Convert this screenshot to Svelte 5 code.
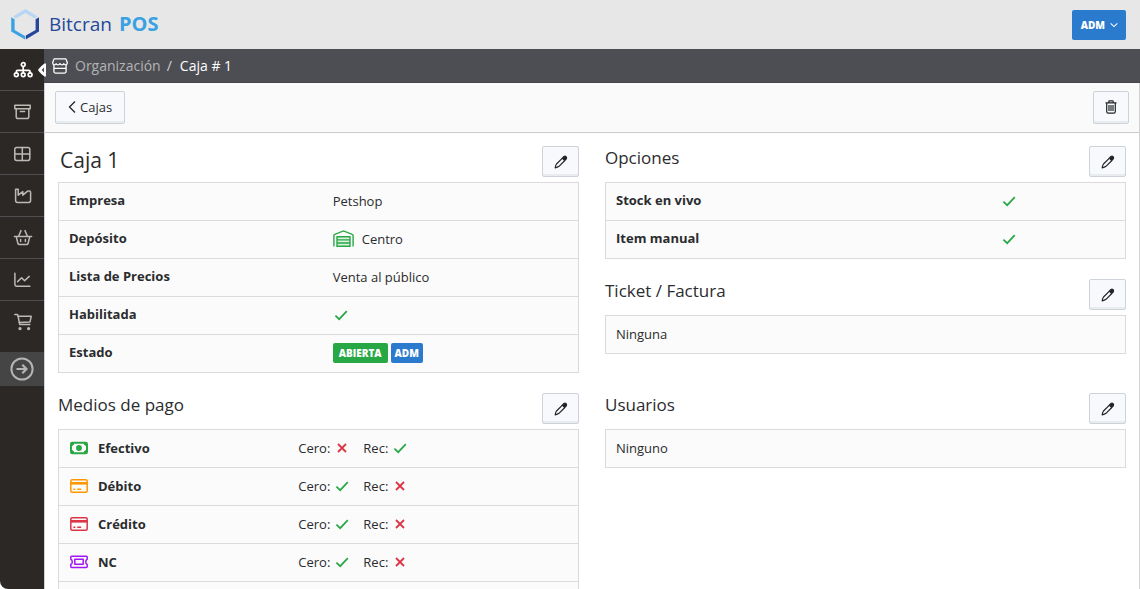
<script lang="ts">
  type IconName = string;

  const nav: { icon: IconName; label: string; active?: boolean }[] = [
    { icon: 'org', label: 'Organización', active: true },
    { icon: 'archive', label: 'Archivo' },
    { icon: 'grid', label: 'Tablas' },
    { icon: 'factory', label: 'Producción' },
    { icon: 'basket', label: 'Ventas' },
    { icon: 'chart', label: 'Reportes' },
    { icon: 'cart', label: 'Compras' }
  ];

  const options = ['Stock en vivo', 'Item manual'];

  const payments = [
    { name: 'Efectivo', icon: 'cash', zero: false, surcharge: true },
    { name: 'Débito', icon: 'debit', zero: true, surcharge: false },
    { name: 'Crédito', icon: 'credit', zero: true, surcharge: false },
    { name: 'NC', icon: 'ticket', zero: true, surcharge: false }
  ];
</script>

{#snippet check()}
  <svg class="mark mark--yes" viewBox="0 0 16 16" role="img" aria-label="Sí">
    <path d="M2.4 8.6 6.2 12.2 13.8 4.2" />
  </svg>
{/snippet}

{#snippet cross()}
  <svg class="mark mark--no" viewBox="0 0 16 16" role="img" aria-label="No">
    <path d="M4 4 12 12M12 4 4 12" />
  </svg>
{/snippet}

{#snippet editButton(label: string)}
  <button class="btn btn--icon" type="button" aria-label={label}>
    <svg viewBox="0 0 16 16" width="16" height="16" fill="none" stroke="#212529" stroke-width="1.2" stroke-linejoin="round">
      <path d="M9.4 4.1 3.5 10q-1 1.4-1.3 3.8 2.4-.4 3.8-1.5l5.8-5.8" />
      <path d="M9.3 4.2 11 2.5q1.1-.7 2.1.2.9 1 .2 2.2l-1.6 1.7z" fill="#212529" />
    </svg>
  </button>
{/snippet}

{#snippet navIcon(name: IconName)}
  <svg viewBox="0 0 20 20" width="20" height="20" fill="none" stroke="currentColor" stroke-width="1.5" stroke-linejoin="round" stroke-linecap="round">
    {#if name === 'org'}
      <g stroke-width="1.7">
        <circle cx="10.2" cy="4.6" r="1.9" />
        <circle cx="3.3" cy="14.8" r="1.9" />
        <circle cx="10.2" cy="14.8" r="1.9" />
        <circle cx="17.1" cy="14.8" r="1.9" />
        <path d="M10.2 6.5v6.4M3.3 12.9v-1.2q0-1.3 1.3-1.3h11.200q1.3 0 1.3 1.3v1.2" />
      </g>
    {:else if name === 'archive'}
      <path d="M1.8 3.3h15.4v3.4H1.8zM3.2 6.7v8q0 1.8 1.8 1.8h9q1.8 0 1.8-1.8v-8M7.4 9.6h4.2" />
    {:else if name === 'grid'}
      <rect x="1.8" y="3.4" width="15" height="13" rx="1.8" />
      <path d="M9.3 3.4v13M1.8 9.9h15" />
    {:else if name === 'factory'}
      <path d="M2.6 3.2h2.6v6l4.6-3.6v3.6L14.6 5.2q1.2-.6 2.4 0 .6.4.6 1.2v8.2q0 1.8-1.8 1.8H4.4q-1.8 0-1.8-1.8z" />
    {:else if name === 'basket'}
      <path d="M1.4 8.400h17.200M3.2 8.400 4.8 15q.3 1.600 1.900 1.600h6.600q1.600 0 1.900-1.600l1.600-6.600M5.6 8.200 8 2.600M14.4 8.200 12 2.600M7.600 11.600v2M12.400 11.600v2" />
    {:else if name === 'chart'}
      <path d="M1.9 3.2v11.6q0 1.4 1.4 1.4h13.6M4.6 11.6l4-3.8 3 3 4.6-4.4" />
    {:else if name === 'cart'}
      <path d="M1.8 2.400H4q.7 0 .9.7l1.800 9.3h10.100M4.700 4.300h13.500l-1.200 5.600-11 .700" />
      <circle cx="7" cy="16.600" r=".9" fill="currentColor" />
      <circle cx="15.600" cy="16.600" r=".9" fill="currentColor" />
    {/if}
  </svg>
{/snippet}

{#snippet payIcon(name: IconName)}
  <svg class="pay pay--{name}" viewBox="0 0 18 16" width="18" height="16" fill="none" stroke="currentColor" stroke-width="1.5" stroke-linejoin="round">
    {#if name === 'cash'}
      <rect x="1" y="2.8" width="16" height="10.4" rx="1.2" stroke-width="2" />
      <path d="M1.5 5.6q2 0 2.3-2.3H1.5zM16.5 5.6q-2 0-2.3-2.3h2.3zM1.5 10.4q2 0 2.3 2.3H1.5zM16.5 10.4q-2 0-2.3 2.3h2.3z" fill="currentColor" stroke-width="1" />
      <circle cx="9" cy="8" r="2.9" fill="currentColor" stroke="none" />
    {:else if name === 'ticket'}
      <path d="M.8 3q0-.8.8-.8h14.8q.8 0 .8.8v2.200q-1.5.6-1.5 2.600t1.500 2.600v2.200q0 .8-.8.8H1.600q-.8 0-.8-.8v-2.200q1.500-.6 1.500-2.600T.8 5.200z" />
      <rect x="4.800" y="5.300" width="8.400" height="5" />
    {:else}
      <rect x=".8" y="1.7" width="16.4" height="12.6" rx="1.5" />
      <path d="M1 5.300h16" stroke-width="2.600" />
      <path d="M3.400 11.200h2M7.200 11.200h4" stroke-width="1.400" />
    {/if}
  </svg>
{/snippet}

<div class="app">
  <header class="topbar">
    <a class="brand" href="/" aria-label="Bitcran POS">
      <svg viewBox="0 0 30 32" width="30" height="32" aria-hidden="true">
        <path d="M3.400 8.200 15.400 1 27.200 8.200 25 10.600 15.400 5 5.600 10.600z" fill="#b7d5f4" />
        <path d="M1.200 9.200 4.600 11.200V22L15 28V31.600L1.200 23.600z" fill="#3aa2e2" />
        <path d="M29 9.200 25.600 11.200V22L15.800 27.600V31.600L29 23.600z" fill="#25479a" />
      </svg>
      <span class="brand__name">Bitcran <b>POS</b></span>
    </a>
    <button class="user" type="button">
      ADM
      <svg viewBox="0 0 10 10" width="8" height="8" fill="none" stroke="currentColor" stroke-width="1.3" aria-hidden="true"><path d="M.8 3 5 7l4.200-4" /></svg>
    </button>
  </header>

  <div class="body">
    <nav class="sidebar" aria-label="Principal">
      {#each nav as item}
        <a class="sidebar__item" class:active={item.active} href="/" aria-label={item.label}>
          {@render navIcon(item.icon)}
          {#if item.active}
            <svg class="sidebar__arrow" viewBox="0 0 8 14" width="8" height="14" aria-hidden="true">
              <path d="M8 .5v13H6.500Q3 11 .6 8q-.8-1 0-2Q3 3 6.500.5z" fill="#fff" />
              <path d="M6 4.500v5L3.600 7z" fill="#4c4d52" />
            </svg>
          {/if}
        </a>
      {/each}
      <button class="sidebar__toggle" type="button" aria-label="Expandir menú">
        <svg viewBox="0 0 24 24" width="24" height="24" fill="none" stroke="currentColor" stroke-width="2" aria-hidden="true">
          <circle cx="12" cy="12" r="10.6" />
          <path d="M6.500 12H16M12.300 7.800 16.500 12l-4.200 4.200" stroke-width="2.2" />
        </svg>
      </button>
    </nav>

    <div class="page">
      <nav class="crumbs" aria-label="Ruta">
        <svg viewBox="0 0 16 16" width="16" height="16" fill="none" stroke="#fff" stroke-width="1.3" stroke-linejoin="round" aria-hidden="true">
          <path d="M2.700.9h10.600q.8 0 1 .8l1 3q.2 1.800-1.500 2.200-1.400.1-1.900-1.300-.5 1.300-1.900 1.300T8 5.600q-.5 1.300-2 1.300T4.100 5.600Q3.600 7 2.200 6.900.5 6.500.7 4.700l1-3q.2-.8 1-.8zM1.900 7v6.600q0 1.500 1.500 1.500h9.200q1.500 0 1.500-1.500V7M2 10.400h12" />
        </svg>
        <a href="/">Organización</a>
        <span class="crumbs__sep">/</span>
        <span class="crumbs__current">Caja # 1</span>
      </nav>

      <div class="toolbar">
        <button class="btn btn--back" type="button">
          <svg viewBox="0 0 8 14" width="8" height="14" fill="none" stroke="#212529" stroke-width="1.3" aria-hidden="true"><path d="M7 1.500 1.500 7 7 12.500" /></svg>
          Cajas
        </button>
        <button class="btn btn--trash" type="button" aria-label="Eliminar">
          <svg viewBox="0 0 12 14" width="12" height="14" fill="none" stroke="#212529" stroke-width="1.2" aria-hidden="true">
            <path d="M.5 2.900h11M3.800 2.800V1.600q0-.8.8-.8h2.800q.8 0 .8.8v1.200M1.700 3v8.600q0 1.600 1.600 1.600h5.400q1.600 0 1.600-1.600V3M4 5v6M6 5v6M8 5v6" />
          </svg>
        </button>
      </div>

      <main class="content">
        <section>
          <div class="head">
            <h1>Caja 1</h1>
            {@render editButton('Editar caja')}
          </div>
          <table class="details">
            <tbody>
              <tr><th scope="row">Empresa</th><td>Petshop</td></tr>
              <tr>
                <th scope="row">Depósito</th>
                <td>
                  <span class="inline">
                    <svg viewBox="0 0 21 17" width="21" height="17" fill="none" stroke="#28a745" stroke-width="1.4" aria-hidden="true">
                      <path d="M.9 16.500V5.600q0-1 .9-1.300L10.500.9l8.700 3.400q.9.3.9 1.300v10.900" />
                      <path d="M4 6.800h13v9.400H4zM4 9.900h13M4 13h13" fill="#d9f0de" />
                    </svg>
                    Centro
                  </span>
                </td>
              </tr>
              <tr><th scope="row">Lista de Precios</th><td>Venta al público</td></tr>
              <tr><th scope="row">Habilitada</th><td>{@render check()}</td></tr>
              <tr>
                <th scope="row">Estado</th>
                <td>
                  <span class="badges">
                    <span class="badge badge--open">ABIERTA</span>
                    <span class="badge badge--user">ADM</span>
                  </span>
                </td>
              </tr>
            </tbody>
          </table>
        </section>

        <div class="stack">
          <section>
            <div class="head">
              <h2>Opciones</h2>
              {@render editButton('Editar opciones')}
            </div>
            <table class="options">
              <tbody>
                {#each options as option}
                  <tr><th scope="row">{option}</th><td>{@render check()}</td></tr>
                {/each}
              </tbody>
            </table>
          </section>
          <section>
            <div class="head">
              <h2>Ticket / Factura</h2>
              {@render editButton('Editar ticket')}
            </div>
            <table><tbody><tr><td>Ninguna</td></tr></tbody></table>
          </section>
        </div>

        <section>
          <div class="head">
            <h2>Medios de pago</h2>
            {@render editButton('Editar medios de pago')}
          </div>
          <table class="payments">
            <tbody>
              {#each payments as payment}
                <tr>
                  <th scope="row"><span class="inline">{@render payIcon(payment.icon)}{payment.name}</span></th>
                  <td>
                    <span class="flags">
                      <span class="flag">Cero: {#if payment.zero}{@render check()}{:else}{@render cross()}{/if}</span>
                      <span class="flag">Rec: {#if payment.surcharge}{@render check()}{:else}{@render cross()}{/if}</span>
                    </span>
                  </td>
                </tr>
              {/each}
              <tr><th></th><td></td></tr>
            </tbody>
          </table>
        </section>

        <section>
          <div class="head">
            <h2>Usuarios</h2>
            {@render editButton('Editar usuarios')}
          </div>
          <table><tbody><tr><td>Ninguno</td></tr></tbody></table>
        </section>
      </main>
    </div>
  </div>
</div>

<style>
  .app {
    display: flex;
    flex-direction: column;
    height: 100vh;
    overflow: hidden;
    background: #fff;
    color: #2a2c2e;
    font: 13px/20px "Open Sans", "Noto Sans", sans-serif;
  }
  .app :global(*) { box-sizing: border-box; }
  svg { display: block; flex: none; }
  button { font: inherit; color: inherit; cursor: pointer; }
  a { text-decoration: none; }

  .topbar {
    flex: none;
    display: flex;
    align-items: center;
    justify-content: space-between;
    height: 49px;
    padding: 0 14px 0 10px;
    background: #e7e7e7;
  }
  .brand { display: flex; align-items: center; gap: 9px; padding-bottom: 2px; }
  .brand__name {
    display: flex;
    gap: 7px;
    color: #25479a;
    font-size: 19px;
    line-height: 24px;
  }
  .brand__name b { color: #3aa2e2; font-size: 20px; }
  .user {
    display: flex;
    align-items: center;
    gap: 5px;
    height: 30px;
    padding: 0 8px 0 9px;
    border: 0;
    border-radius: 2px;
    background: #2a7acd;
    color: #fff;
    font-size: 10px;
    font-weight: 800;
  }

  .body { flex: 1; display: flex; min-height: 0; }
  .sidebar {
    flex: none;
    width: 44px;
    background: #2c2825;
    border-bottom-left-radius: 8px;
  }
  .sidebar__item {
    position: relative;
    display: flex;
    align-items: center;
    justify-content: center;
    height: 42px;
    padding-left: 2px;
    border-bottom: 1px solid #4f4f52;
    color: #bdb9b6;
  }
  .sidebar__item:nth-child(7) { border-bottom: 0; }
  .sidebar__item.active { color: #fff; }
  .sidebar__arrow { position: absolute; right: -2px; top: 14px; z-index: 1; }
  .sidebar__toggle {
    display: flex;
    align-items: center;
    justify-content: center;
    width: 100%;
    height: 34px;
    margin-top: 9px;
    padding: 0;
    border: 0;
    background: #454545;
    color: #b4b4b4;
  }

  .page {
    flex: 1;
    min-width: 0;
    display: flex;
    flex-direction: column;
    border-left: 1px solid #d2d2d2;
    border-right: 1px solid #d2d2d2;
  }
  .crumbs {
    flex: none;
    display: flex;
    align-items: center;
    height: 34px;
    margin: 0 -1px;
    padding: 1px 8px 0;
    background: #4d4e53;
    border-bottom: 1px solid #46474b;
    font-size: 14px;
  }
  .crumbs a { margin-left: 7px; color: #b3b3b5; }
  .crumbs__sep { margin: 0 8px 0 6px; color: #d2d2d2; }
  .crumbs__current { color: #fff; }

  .toolbar {
    flex: none;
    display: flex;
    align-items: center;
    justify-content: space-between;
    height: 50px;
    padding: 0 10px;
    background: #fafafa;
    border-bottom: 1px solid #cbcbcb;
  }
  .btn {
    display: flex;
    align-items: center;
    justify-content: center;
    gap: 4px;
    height: 33px;
    padding: 0 12px 2px;
    border: 1px solid #cdd3d9;
    border-radius: 2px;
    background: #f8f9fc;
    box-shadow: inset 0 -2px 0 #e9ecef;
  }
  .btn--trash { width: 36px; padding: 0 1px 1px 0; }
  .btn--icon { width: 37px; height: 31px; padding: 0; }

  .content {
    flex: 1;
    display: grid;
    grid-template-columns: repeat(2, minmax(0, 1fr));
    align-content: start;
    gap: 20px 26px;
    padding: 13px;
    overflow-y: auto;
    scrollbar-width: none;
  }
  .stack { display: grid; align-content: start; gap: 20px; }
  .head { display: flex; justify-content: space-between; height: 36px; }
  h1, h2 { margin: 0; font-weight: 400; }
  h1 { padding-left: 2px; font-size: 21px; line-height: 28px; }
  h2 { font-size: 17px; line-height: 24px; }

  table {
    width: 100%;
    table-layout: fixed;
    border: 1px solid #dbdbdb;
    border-collapse: collapse;
    background: #fbfbfb;
  }
  tr { height: 38px; border-bottom: 1px solid #dbdbdb; }
  th, td { padding: 0 10px 2px; text-align: left; vertical-align: middle; }
  th { padding-bottom: 4px; font-weight: 700; }
  .details th { width: 51%; }
  .details td { padding-left: 9px; }
  .options th { width: 74%; }
  .options td { padding-left: 11px; }
  .payments th { width: 44%; padding-bottom: 2px; }
  .payments td { padding-left: 11px; }
  .inline { display: flex; align-items: center; gap: 8px; }
  .payments .inline { gap: 10px; }
  .flags { display: flex; gap: 13px; }
  .flag { display: flex; align-items: center; gap: 4px; }

  .mark { width: 16px; height: 16px; fill: none; stroke-width: 1.7; }
  .mark--yes { stroke: #28a745; }
  .mark--no { stroke: #dc3545; stroke-width: 1.8; }
  .pay { margin-left: 1px; }
  .pay--cash { color: #28a745; }
  .pay--debit { color: #ff9800; }
  .pay--credit { color: #dc3545; }
  .pay--ticket { color: #a516f5; }

  .badges { display: flex; gap: 3px; }
  .badge {
    padding: 0 4px;
    border-radius: 2px;
    color: #fff;
    font-size: 10px;
    line-height: 20px;
    font-weight: 800;
  }
  .badge--open { padding: 0 6px; background: #28a745; }
  .badge--user { background: #2a7acd; }
</style>
